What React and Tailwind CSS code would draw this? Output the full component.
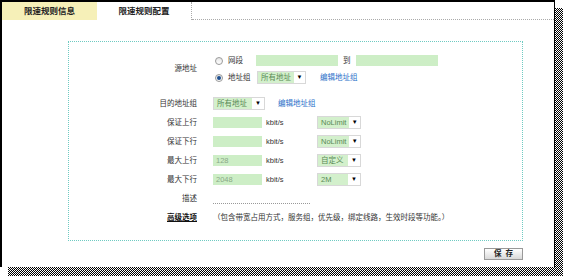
const Select = ({ value, width }) => (
  <div className={`flex h-[13px] items-center overflow-hidden whitespace-nowrap border border-[#d8d8d8] bg-white ${width}`}>
    <span className="flex h-full flex-1 items-center bg-[#d3f0cc] px-[3px] text-[#5a8a55]">{value}</span>
    <span className="flex w-[12px] items-center justify-center text-[6px] text-black">▼</span>
  </div>
);

const Radio = ({ checked }) => (
  <span className="flex h-[8px] w-[8px] items-center justify-center rounded-full border border-[#9a9a9a] bg-gradient-to-b from-[#e6e6e6] to-white">
    {checked && <span className="h-[4px] w-[4px] rounded-full bg-[#1d4f8f]" />}
  </span>
);

const GreenInput = ({ value, width = "w-[49px]" }) => (
  <div className={`flex h-[11px] items-center bg-[#cdeec6] px-[3px] text-[#8aa886] ${width}`}>{value}</div>
);

const Row = ({ label, children, className = "" }) => (
  <div className={`flex items-center ${className}`}>
    <div className="w-[129px] pr-[1px] text-right">{label}</div>
    <div className="ml-[15px] flex items-center">{children}</div>
  </div>
);

const SpeedRow = ({ label, value, sel }) => (
  <Row label={label} className="h-[13px] mt-[6px]">
    <GreenInput value={value} />
    <span className="ml-[4px] w-[51px]">kbit/s</span>
    <Select value={sel} width="w-[44px]" />
  </Row>
);

export default function App() {
  return (
    <div className="relative h-[276px] w-[563px] bg-white font-['Liberation_Sans','Noto_Sans_CJK_SC',sans-serif] text-[7.5px] text-[#333]">
      <div className="absolute left-[8px] top-[8px] h-[268px] w-[555px] bg-[image:repeating-conic-gradient(#000_0%_25%,#fff_0%_50%)] bg-[length:2px_2px]" />
      <div className="relative flex h-[267px] w-[555px] flex-col border-l-2 border-t-2 border-r border-black bg-white">
        {/* tabs */}
        <div className="flex h-[18px] items-stretch">
          <div className="flex w-[95px] items-center justify-center bg-[#f6f0b8] text-[8.5px] font-bold text-[#222]">
            限速规则信息
          </div>
          <div className="flex w-[95px] items-center justify-center border-r border-dotted border-[#aaa] text-[8.5px] font-bold text-[#222]">
            限速规则配置
          </div>
          <div className="flex-1 border-b border-dotted border-[#aaa]" />
        </div>

        <div className="ml-[66px] mt-[21px] h-[200px] w-[455px] border border-dotted border-[#6fcac2] pt-[12px]">
          {/* source */}
          <div className="flex items-center">
            <div className="w-[129px] pr-[1px] text-right">源地址</div>
            <div className="ml-[17px] flex flex-col gap-[4px]">
              <div className="flex h-[13px] items-center">
                <Radio />
                <span className="ml-[5px] w-[28px]">网段</span>
                <GreenInput width="w-[82px]" />
                <span className="mx-[5px]">到</span>
                <GreenInput width="w-[82px]" />
              </div>
              <div className="flex h-[13px] items-center">
                <Radio checked />
                <span className="ml-[5px] w-[29px]">地址组</span>
                <Select value="所有地址" width="w-[49px]" />
                <span className="ml-[14px] text-[#2a6fc9]">编辑地址组</span>
              </div>
            </div>
          </div>

          <Row label="目的地址组" className="mt-[13px] h-[13px]">
            <Select value="所有地址" width="w-[52px]" />
            <span className="ml-[13px] text-[#2a6fc9]">编辑地址组</span>
          </Row>

          <SpeedRow label="保证上行" value="" sel="NoLimit" />
          <SpeedRow label="保证下行" value="" sel="NoLimit" />
          <SpeedRow label="最大上行" value="128" sel="自定义" />
          <SpeedRow label="最大下行" value="2048" sel="2M" />

          <Row label="描述" className="mt-[6px] h-[13px]">
            <div className="mt-[10px] w-[97px] border-b border-dotted border-[#999]" />
          </Row>

          <Row label={<span className="font-bold text-[#111] underline">高级选项</span>} className="mt-[6px] h-[13px]">
            <span>（包含带宽占用方式，服务组，优先级，绑定线路，生效时段等功能。）</span>
          </Row>
        </div>

        <div className="ml-[482px] mt-[7px]">
          <button className="flex h-[12px] w-[39px] items-center justify-center whitespace-pre border border-[#999] bg-gradient-to-b from-white to-[#d9d9d9] text-[7.5px] font-bold text-[#222]">
            {"保  存"}
          </button>
        </div>
      </div>
    </div>
  );
}
